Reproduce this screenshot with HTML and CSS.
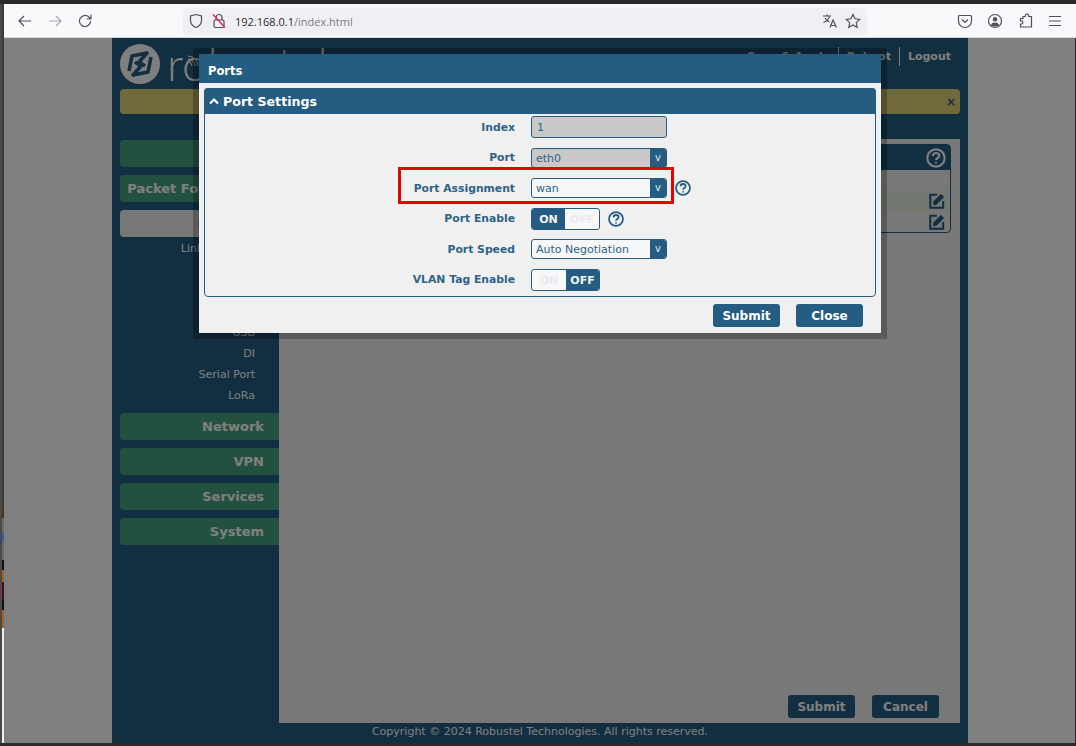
FILE: index.html
```html
<!DOCTYPE html>
<html lang="en">
<head>
<meta charset="utf-8">
<title>Ports</title>
<link rel="stylesheet" href="styles.css">
</head>
<body>
<div class="screen-top"></div>
<div class="window">
  <div class="screen-left"></div>
  <div class="browser">
    <header class="toolbar">
      <div class="nav-icons">
        <svg class="ico" viewBox="0 0 16 16"><path d="M14 8H2.500M7 3 2 8l5 5"/></svg>
        <svg class="ico faint" viewBox="0 0 16 16"><path d="M2 8h11.500M9 3l5 5-5 5"/></svg>
        <svg class="ico" viewBox="0 0 16 16"><path d="M13.500 8a5.500 5.500 0 1 1-1.700-4L14 6M14 1.800V6H9.800"/></svg>
      </div>
      <div class="urlbar">
        <svg class="ico" viewBox="0 0 16 16"><path d="M8 1.500 13.500 3v4.500c0 3.500-2.500 5.800-5.500 7-3-1.200-5.500-3.500-5.500-7V3z"/></svg>
        <svg class="ico lock" viewBox="0 0 16 16"><rect x="3" y="7" width="10" height="7.500" rx="1.500"/><path d="M5 7V4.500a3 3 0 0 1 6 0V7"/><path class="slash" d="M2 1.500 14 14.500"/></svg>
        <span class="url">192.168.0.1<span class="url-path">/index.html</span></span>
        <span class="url-spacer"></span>
        <svg class="ico" viewBox="0 0 16 16"><path d="M1 3h8M5 1.500V3M7.500 3C7 6 4.500 8.500 1.500 9.500M3 5c1 2 3 3.500 4.500 4M8 14.500 11 7l3.500 7.500M9 12.500h4.500"/></svg>
        <svg class="ico" viewBox="0 0 16 16"><path d="m8 1.500 2 4.300 4.700.6-3.400 3.200.9 4.700L8 12l-4.200 2.300.9-4.700L1.300 6.400 6 5.800z"/></svg>
      </div>
      <div class="tool-icons">
        <svg class="ico" viewBox="0 0 16 16"><path d="M2.500 2.500h11A1 1 0 0 1 14.500 3.500V8a6.500 6.500 0 0 1-13 0V3.500a1 1 0 0 1 1-1zM5 6.500l3 3 3-3"/></svg>
        <svg class="ico" viewBox="0 0 16 16"><circle cx="8" cy="8" r="6.500"/><circle class="solid" cx="8" cy="6.200" r="2.200"/><path class="solid" d="M3.800 12.200c.7-2 2.300-2.700 4.200-2.700s3.500.7 4.200 2.700C10 14 6 14 3.800 12.200z"/></svg>
        <svg class="ico" viewBox="0 0 16 16"><path d="M6 3.500h2.300V2.800a1.700 1.700 0 0 1 3.400 0v.7h2.800v10.500H3.500v-3h.8a1.600 1.600 0 0 0 0-3.200h-.8V5.500H6z"/></svg>
        <svg class="ico" viewBox="0 0 16 16"><path d="M2 3.500h12M2 8h12M2 12.500h12"/></svg>
      </div>
    </header>

    <main class="page">
      <div class="app">
        <div class="app-head">
          <div class="brand-row">
            <div class="brand">
              <svg class="logo" viewBox="0 0 40 40">
                <circle class="logo-disc" cx="20" cy="20" r="20"/>
                <path class="logo-mark" d="M9 27 12 12 27 9 19 18 25 22"/>
                <path class="logo-mark" d="M31 13 28 28 13 31 21 22 15 18"/>
              </svg>
              <span class="wordmark">robustel</span>
              <svg class="arcs" viewBox="0 0 12 12"><path d="M1 7a4 4 0 0 1 4 4M1 4a7 7 0 0 1 7 7M1 1a10 10 0 0 1 10 10"/></svg>
            </div>
            <nav class="top-links">
              <a class="top-link">Save &amp; Apply</a>
              <a class="top-link">Reboot</a>
              <a class="top-link">Logout</a>
            </nav>
          </div>
          <div class="notice"><span class="notice-close">×</span></div>
        </div>

        <div class="app-body">
          <aside class="sidebar">
            <div class="nav-btn">Status</div>
            <div class="nav-btn">Packet Forwarding</div>
            <div class="nav-btn current">Interface</div>
            <ul class="subnav">
              <li>Link Manager</li>
              <li>LAN</li>
              <li>Ethernet</li>
              <li>Cellular</li>
              <li>USB</li>
              <li>DI</li>
              <li>Serial Port</li>
              <li>LoRa</li>
            </ul>
            <div class="nav-btn">Network</div>
            <div class="nav-btn">VPN</div>
            <div class="nav-btn">Services</div>
            <div class="nav-btn">System</div>
          </aside>
          <section class="content">
            <div class="card">
              <div class="card-head">
                <span>Port Settings</span>
                <svg class="help help-light" viewBox="0 0 20 20"><circle cx="10" cy="10" r="8.700"/><path d="M6.800 8C7 5.800 8.500 5 10 5c2 0 3.300 1.200 3.300 2.700 0 2.300-3.300 2.300-3.300 4.500"/><path d="M10 14v1.500"/></svg>
              </div>
              <div class="card-gap"></div>
              <div class="card-row tinted">
                <svg class="edit" viewBox="0 0 16 16"><path class="edit-box" d="M8 2.500H2V14h11.500V8"/><path class="edit-pen" d="m5 8.500 6.500-6.500 2.500 2.500L7.500 11 5 11.500z"/></svg>
              </div>
              <div class="card-row">
                <svg class="edit" viewBox="0 0 16 16"><path class="edit-box" d="M8 2.500H2V14h11.500V8"/><path class="edit-pen" d="m5 8.500 6.500-6.500 2.500 2.500L7.500 11 5 11.500z"/></svg>
              </div>
            </div>
            <div class="content-actions">
              <button class="btn">Submit</button>
              <button class="btn">Cancel</button>
            </div>
          </section>
        </div>
        <footer class="copyright">Copyright © 2024 Robustel Technologies. All rights reserved.</footer>
      </div>

      <div class="overlay"></div>

      <div class="modal">
        <div class="modal-title">Ports</div>
        <div class="modal-inner">
          <div class="panel">
            <div class="panel-head">
              <svg class="chev" viewBox="0 0 10 8"><path d="M1 6.500 5 2.500l4 4"/></svg>
              <span>Port Settings</span>
            </div>
            <div class="form">
              <div class="row">
                <label class="label">Index</label>
                <div class="input disabled">1</div>
              </div>
              <div class="row">
                <label class="label">Port</label>
                <div class="select disabled"><span class="sel-text">eth0</span><span class="sel-arrow">v</span></div>
              </div>
              <div class="row">
                <label class="label">Port Assignment</label>
                <div class="select"><span class="sel-text">wan</span><span class="sel-arrow">v</span></div>
                <svg class="help" viewBox="0 0 20 20"><circle cx="10" cy="10" r="8.700"/><path d="M6.800 8C7 5.800 8.500 5 10 5c2 0 3.300 1.200 3.300 2.700 0 2.300-3.300 2.300-3.300 4.500"/><path d="M10 14v1.500"/></svg>
              </div>
              <div class="row">
                <label class="label">Port Enable</label>
                <div class="toggle"><span class="tog-on">ON</span><span class="tog-off">OFF</span></div>
                <svg class="help" viewBox="0 0 20 20"><circle cx="10" cy="10" r="8.700"/><path d="M6.800 8C7 5.800 8.500 5 10 5c2 0 3.300 1.200 3.300 2.700 0 2.300-3.300 2.300-3.300 4.500"/><path d="M10 14v1.500"/></svg>
              </div>
              <div class="row">
                <label class="label">Port Speed</label>
                <div class="select"><span class="sel-text">Auto Negotiation</span><span class="sel-arrow">v</span></div>
              </div>
              <div class="row">
                <label class="label">VLAN Tag Enable</label>
                <div class="toggle"><span class="tog-off">ON</span><span class="tog-on">OFF</span></div>
              </div>
            </div>
          </div>
          <div class="modal-actions">
            <button class="btn">Submit</button>
            <button class="btn">Close</button>
          </div>
        </div>
      </div>

      <div class="highlight"></div>
    </main>
  </div>
</div>
<div class="screen-bottom"></div>
</body>
</html>
```
FILE: styles.css
```css
* { box-sizing: border-box; }
html, body { margin: 0; height: 746px; overflow: hidden; }
body {
  display: flex;
  flex-direction: column;
  background: #2b2a2a;
  font-family: "DejaVu Sans", sans-serif;
  color: #255d82;
}
.screen-top { height: 4px; background: #2b2a2a; flex: none; }
.screen-bottom { height: 3px; background: #2b2a2a; flex: none; }
.window { flex: 1; display: flex; min-height: 0; }
.screen-left {
  width: 4px;
  flex: none;
  border-left: 2px solid #4a4a4a;
  background: linear-gradient(to bottom,
    #3a3a3a 0, #3a3a3a 496px,
    #4a3420 496px, #4a3420 514px,
    #6a6a6a 514px, #6a6a6a 529px,
    #3560a0 529px, #3560a0 538px,
    #6a6a6a 538px, #6a6a6a 556px,
    #111 556px, #111 566px,
    #a8621a 566px, #a8621a 578px,
    #4a0f14 578px, #4a0f14 596px,
    #111 596px, #111 606px,
    #a8621a 606px, #a8621a 624px,
    #eee 624px);
}
.browser { flex: 1; display: flex; flex-direction: column; min-width: 0; }

/* browser chrome */
.toolbar {
  height: 34px;
  flex: none;
  display: flex;
  align-items: center;
  background: #f9f9fb;
  padding: 1px 0 0 13px;
  border-bottom: 1px solid #d6d6da;
}
.ico { width: 16px; height: 16px; fill: none; stroke: #50505a; stroke-width: 1.200; flex: none; }
.ico.faint { stroke: #a8a8ae; }
.ico .solid { fill: #50505a; stroke: none; }
.lock .slash { stroke: #e22850; stroke-width: 1.400; }
.nav-icons { display: flex; gap: 14px; width: 166px; flex: none; }
.urlbar {
  width: 684px;
  height: 27px;
  flex: none;
  display: flex;
  align-items: center;
  gap: 7px;
  padding: 0 6px 0 5px;
  background: #f0f0f4;
  border-radius: 4px;
}
.url { font: 11px "Open Sans", sans-serif; color: #2b2a33; margin-left: 1px; }
.url-path { color: #7a7a82; }
.url-spacer { flex: 1; }
.tool-icons { display: flex; gap: 14px; margin-left: 90px; }
.page {
  position: relative;
  flex: 1;
  min-height: 0;
  display: flex;
  background: #fff;
  padding-left: 108px;
  margin-right: 1px;
}

/* application */
.app {
  width: 856px;
  display: flex;
  flex-direction: column;
  background: #255d82;
}
.app-head { height: 101px; flex: none; padding: 6px 8px 0; }
.brand-row { display: flex; justify-content: space-between; height: 45px; }
.brand { position: relative; display: flex; align-items: flex-start; gap: 7px; }
.logo { width: 40px; height: 40px; flex: none; }
.logo-disc { fill: #fff; }
.logo-mark { fill: none; stroke: #255d82; stroke-width: 3.600; stroke-linejoin: round; }
.wordmark { font: 300 46px Lato, sans-serif; color: #fff; line-height: 40px; }
.arcs { position: absolute; left: 67px; top: 11px; width: 12px; height: 12px; fill: none; stroke: #fff; stroke-width: 1; }
.top-links { display: flex; align-items: center; height: 24px; padding-right: 9px; }
.top-link { font-size: 11px; font-weight: 700; color: #fff; padding: 2px 8px; border-left: 1px solid #fff; line-height: 15px; }
.top-link:first-child { border-left: 0; }
.top-link:last-child { padding-right: 0; }
.notice {
  height: 25px;
  background: #dfd376;
  border-radius: 4px;
  display: flex;
  align-items: center;
  justify-content: flex-end;
  padding-right: 4px;
}
.notice-close { font-weight: 700; font-size: 12px; color: #255d82; }
.app-body { flex: 1; display: flex; min-height: 0; }
.sidebar {
  width: 167px;
  flex: none;
  padding: 1px 0 0 8px;
  display: flex;
  flex-direction: column;
  gap: 8px;
}
.nav-btn {
  height: 27px;
  flex: none;
  background: #45a57e;
  border-radius: 4px 0 0 4px;
  color: #fff;
  font-weight: 700;
  font-size: 13px;
  line-height: 28px;
  text-align: right;
  padding-right: 15px;
  white-space: nowrap;
}
.nav-btn.current { background: #f0f0f0; color: #255d82; }
.subnav {
  list-style: none;
  margin: -8px 0;
  padding: 0 24px 0 0;
  height: 176px;
  flex: none;
  display: flex;
  flex-direction: column;
  color: #fff;
  font-size: 11px;
  text-align: right;
}
.subnav li { height: 21px; line-height: 21px; flex: none; }
.subnav li:first-child { margin-top: 1px; }
.content {
  width: 681px;
  flex: none;
  background: #f0f0f0;
  padding: 5px 9px 5px 8px;
  display: flex;
  flex-direction: column;
  justify-content: space-between;
}
.card { border: 1px solid #255d82; border-radius: 4px; }
.card-head {
  height: 25px;
  background: #255d82;
  display: flex;
  align-items: center;
  justify-content: space-between;
  padding: 0 4px 0 8px;
  color: #fff;
  font-weight: 700;
  font-size: 13px;
}
.card-gap { height: 20px; }
.card-row { height: 21px; display: flex; align-items: center; justify-content: flex-end; padding-right: 4px; }
.card-row.tinted { background: #e6f0e2; }
.edit { width: 18px; height: 18px; fill: none; stroke: #255d82; stroke-width: 1.800; }
.edit-pen { fill: #255d82; stroke-width: .6; }
.content-actions { display: flex; justify-content: flex-end; gap: 17px; padding-right: 12px; }
.copyright { height: 20px; flex: none; color: #fff; text-align: center; font-size: 11px; line-height: 17px; }

/* dialog */
.btn {
  width: 67px;
  height: 23px;
  padding: 0;
  border: 0;
  border-radius: 3px;
  background: #255d82;
  color: #fff;
  font: 700 12px "DejaVu Sans", sans-serif;
}
.overlay { position: absolute; inset: 0; background: rgba(0, 0, 0, .5); }
.modal {
  position: absolute;
  left: 195px;
  top: 16px;
  width: 682px;
  height: 279px;
  background: #f0f0f0;
  box-shadow: 0 0 0 6px rgba(0, 0, 0, .25);
}
.modal-title {
  height: 29px;
  background: #255d82;
  color: #fff;
  font-weight: 700;
  font-size: 11.500px;
  line-height: 35px;
  padding-left: 9px;
}
.modal-inner { padding: 5px 5px 0; }
.panel { height: 209px; border: 1px solid #255d82; border-radius: 4px; }
.panel-head {
  height: 26px;
  margin: -1px -1px 0;
  background: #255d82;
  border-radius: 4px 4px 0 0;
  display: flex;
  align-items: center;
  gap: 4px;
  padding-left: 5px;
  color: #fff;
  font-weight: 700;
  font-size: 12.600px;
}
.chev { width: 10px; height: 8px; fill: none; stroke: #fff; stroke-width: 2.200; }
.form { display: grid; grid-auto-rows: 26px; row-gap: 4.500px; }
.row { display: flex; align-items: center; gap: 16px; }
.label {
  width: 310px;
  flex: none;
  text-align: right;
  font-size: 10.800px;
  font-weight: 700;
  color: #2e6387;
}
.input, .select {
  width: 136px;
  flex: none;
  border: 1px solid #255d82;
  border-radius: 3px;
  font-size: 11px;
  color: #2e6387;
  background: #f5f7f9;
}
.input { height: 22px; line-height: 21px; padding-left: 5px; }
.select { height: 20px; display: flex; overflow: hidden; align-items: stretch; }
.input.disabled, .select.disabled { background: #c9c9c9; }
.sel-text { flex: 1; line-height: 19px; padding-left: 4px; }
.sel-arrow {
  width: 16px;
  background: #255d82;
  color: #dfe8ee;
  text-align: center;
  font-size: 10px;
  line-height: 18px;
}
.toggle {
  width: 69px;
  height: 22px;
  flex: none;
  display: flex;
  border: 1px solid #255d82;
  border-radius: 3px;
  overflow: hidden;
  font-size: 11px;
  font-weight: 700;
  line-height: 22px;
  text-align: center;
}
.tog-on { width: 33px; background: #255d82; color: #f5f5f5; flex: none; }
.tog-off { flex: 1; background: #f8f8fb; color: #e9e9f0; border-radius: 3px; }
.help { width: 16px; height: 16px; fill: none; stroke: #255d82; stroke-width: 2.200; flex: none; margin-left: -8px; }
.help-light { width: 20px; height: 20px; stroke: #fff; margin-left: 0; }
.modal-actions { display: flex; justify-content: flex-end; gap: 16px; padding: 7px 13px 0 0; }
.highlight {
  position: absolute;
  left: 394px;
  top: 129px;
  width: 276px;
  height: 37px;
  border: 3px solid #e60000;
}
```
